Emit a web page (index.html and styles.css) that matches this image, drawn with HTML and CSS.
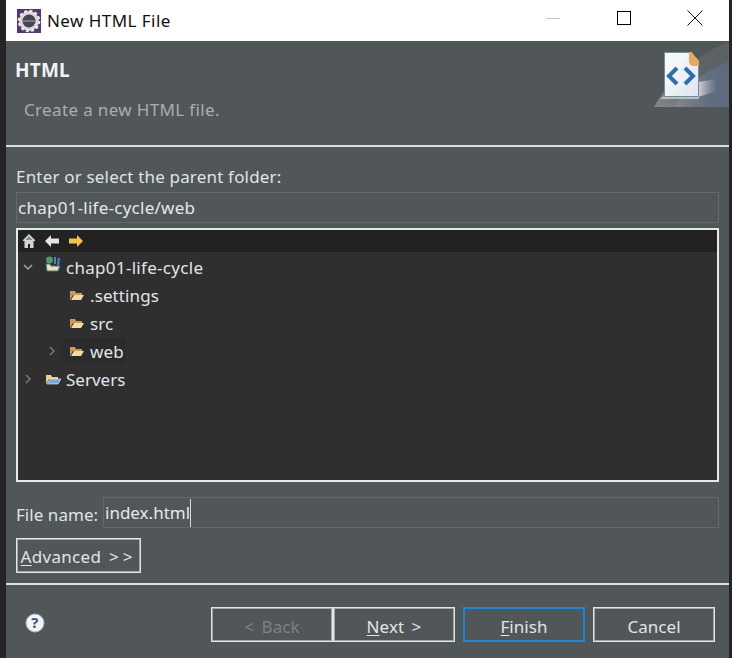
FILE: index.html
```html
<!DOCTYPE html>
<html lang="en">
<head>
<meta charset="utf-8">
<title>New HTML File</title>
<link rel="stylesheet" href="styles.css">
</head>
<body>
<div class="window">
  <header class="titlebar">
    <svg class="app-icon" width="24" height="24" viewBox="0 0 24 24">
      <rect width="24" height="24" fill="#51386f"/>
      <circle cx="12" cy="12" r="8.2" fill="none" stroke="#d8d8d8" stroke-width="3.4"/>
      <circle cx="12" cy="12" r="10" fill="none" stroke="#e8e8e8" stroke-width="2.6" stroke-dasharray="3 2.24"/>
      <circle cx="12" cy="12" r="6.2" fill="#45454f"/>
      <rect x="6" y="11" width="12" height="2" fill="#77778a"/>
    </svg>
    <span class="title-text">New HTML File</span>
    <div class="win-controls">
      <svg class="win-btn" width="16" height="16" viewBox="0 0 16 16"><path d="M1 8.500h14" stroke="#c4c4c4" fill="none"/></svg>
      <svg class="win-btn" width="16" height="16" viewBox="0 0 16 16"><rect x="1.500" y="1.500" width="13" height="13" fill="none" stroke="#000"/></svg>
      <svg class="win-btn" width="16" height="16" viewBox="0 0 16 16"><path d="M.5.5l15 15M15.500.5l-15 15" stroke="#111" fill="none"/></svg>
    </div>
  </header>

  <section class="banner">
    <div class="banner-text">
      <h1 class="banner-title">HTML</h1>
      <p class="banner-desc">Create a new HTML file.</p>
    </div>
    <svg class="banner-art" width="78" height="67" viewBox="0 0 78 67">
      <defs>
        <linearGradient id="sheet" x1="0" y1="0" x2="1" y2="1"><stop offset="0" stop-color="#fbfcfe"/><stop offset="1" stop-color="#dfe6f0"/></linearGradient>
        <linearGradient id="glowA" x1="0" y1="1" x2="1" y2="0"><stop offset="0" stop-color="#85888a"/><stop offset=".5" stop-color="#5f6467"/><stop offset="1" stop-color="#5a6063"/></linearGradient>
        <linearGradient id="glowB" x1="0" y1="0" x2="1" y2="0"><stop offset="0" stop-color="#85888b"/><stop offset=".6" stop-color="#626e80"/><stop offset="1" stop-color="#5d6a7d"/></linearGradient>
        <linearGradient id="shine" x1="0" y1="0" x2="1" y2="0"><stop offset="0" stop-color="#d6d3dc"/><stop offset="1" stop-color="#a9a8b4" stop-opacity="0"/></linearGradient>
      </defs>
      <path d="M3 66C15 45 35 18 78 1V66Z" fill="url(#glowA)"/>
      <path d="M24 66C32 50 50 30 78 21V66Z" fill="url(#glowB)"/>
      <path d="M47 41L66 38V50L47 56Z" fill="url(#shine)"/>
      <path d="M9 58L13 55H48V58Z" fill="#bdbdbd"/>
      <path d="M13.500 11.500H40L47.500 20V55.500H13.500Z" fill="url(#sheet)" stroke="#6f9095"/>
      <path d="M38 11H40.500L48 20V25H42Q37 24 38 17Z" fill="#e8a862"/>
      <path d="M26 27L18 35 26 43" fill="none" stroke="#2f6ea6" stroke-width="4"/>
      <path d="M34 27L42 35 34 43" fill="none" stroke="#2f6ea6" stroke-width="4"/>
    </svg>
  </section>

  <main class="content">
    <label class="field-label">Enter or select the parent folder:</label>
    <div class="text-field parent-field">chap01-life-cycle/web</div>

    <div class="tree">
      <div class="tree-toolbar">
        <svg width="14" height="16" viewBox="0 0 14 16"><path d="M7 1L1 7v1h1.500v7H6v-4h2v4h3.500V8H13V7z" fill="#d4d4d4"/><path d="M7 3L3.500 7h7z" fill="#8a8a8a"/></svg>
        <svg width="16" height="14" viewBox="0 0 16 14"><path d="M1 7l6-6v3.500h8v5H7V13z" fill="#e6e6e6"/></svg>
        <svg width="16" height="14" viewBox="0 0 16 14"><path d="M15 7L9 1v3.500H1v5h8V13z" fill="#f4c24f"/></svg>
      </div>
      <ul class="tree-list">
        <li class="tree-row depth-0">
          <svg class="twisty" width="10" height="10" viewBox="0 0 10 10"><path d="M1 3l4 4 4-4" fill="none" stroke="#a8a8a8" stroke-width="1.500"/></svg>
          <svg class="node-icon project-icon" width="16" height="18" viewBox="0 0 16 18"><path d="M1 9h4l1 2h9l-2 5H2z" fill="#f3dfa8" stroke="#3f6fa8"/><circle cx="4.500" cy="5" r="3.500" fill="#4c9a6a"/><path d="M10 9V2M13 10l1-7" stroke="#4c86c8" stroke-width="2"/></svg>
          <span>chap01-life-cycle</span>
        </li>
        <li class="tree-row depth-1"><i class="twisty-gap"></i><svg class="node-icon" width="16" height="14" viewBox="0 0 16 14"><path d="M1 12V3h5l1 2h6v2H4l-3 5z" fill="#c99a55"/><path d="M2 12l3-5h10l-3 5z" fill="#f4d9a4"/></svg><span>.settings</span></li>
        <li class="tree-row depth-1"><i class="twisty-gap"></i><svg class="node-icon" width="16" height="14" viewBox="0 0 16 14"><path d="M1 12V3h5l1 2h6v2H4l-3 5z" fill="#c99a55"/><path d="M2 12l3-5h10l-3 5z" fill="#f4d9a4"/></svg><span>src</span></li>
        <li class="tree-row depth-1">
          <svg class="twisty" width="10" height="10" viewBox="0 0 10 10"><path d="M3 1l4 4-4 4" fill="none" stroke="#777" stroke-width="1.500"/></svg>
          <span class="hover-node"><svg class="node-icon" width="16" height="14" viewBox="0 0 16 14"><path d="M1 12V3h5l1 2h6v2H4l-3 5z" fill="#c99a55"/><path d="M2 12l3-5h10l-3 5z" fill="#f4d9a4"/></svg><span>web</span></span>
        </li>
        <li class="tree-row depth-0">
          <svg class="twisty" width="10" height="10" viewBox="0 0 10 10"><path d="M3 1l4 4-4 4" fill="none" stroke="#777" stroke-width="1.500"/></svg>
          <svg class="node-icon" width="16" height="14" viewBox="0 0 16 14"><path d="M1 12V3h5l1 2h6v2H4l-3 5z" fill="#f0cf8c"/><path d="M2 12l3-5h11l-3 5z" fill="#7ea6dc" stroke="#dbe8f8" stroke-width=".7"/></svg><span class="servers">Servers</span>
        </li>
      </ul>
    </div>

    <div class="file-row">
      <label class="file-label">File name:</label>
      <div class="text-field file-field"><span class="caret-text">index.html</span></div>
    </div>

    <button class="btn advanced"><u>A</u>dvanced <span class="chev">&gt;&gt;</span></button>
  </main>

  <footer class="footer">
    <svg class="help" width="20" height="20" viewBox="0 0 20 20">
      <circle cx="10" cy="10" r="9" fill="#f1f3f8" stroke="#aab4cc"/>
      <text x="10" y="15" text-anchor="middle" class="help-mark">?</text>
    </svg>
    <div class="actions">
      <div class="nav-pair">
        <button class="btn disabled">&lt; Back</button>
        <button class="btn"><u>N</u>ext &gt;</button>
      </div>
      <button class="btn primary"><u>F</u>inish</button>
      <button class="btn">Cancel</button>
    </div>
  </footer>
</div>
</body>
</html>
```
FILE: styles.css
```css
* { box-sizing: border-box; }
html, body { margin: 0; height: 100%; }
body {
  background: #242424;
  font-family: "Noto Sans", "Noto Sans CJK KR", sans-serif;
  font-size: 17px;
  letter-spacing: .18px;
  color: #dfe3e6;
  overflow: hidden;
}
.window {
  margin-left: 6px;
  width: 723px;
  height: 658px;
  background: #515658;
  display: flex;
  flex-direction: column;
}
.titlebar {
  height: 41px;
  background: #fff;
  display: flex;
  align-items: center;
  padding-left: 11px;
  color: #111;
  flex: none;
}
.title-text { margin-left: 6px; letter-spacing: .45px; }
.win-controls {
  margin-left: auto;
  display: flex;
  gap: 55px;
  padding-right: 26px;
}
.win-btn { display: block; margin-top: -5px; }
.banner {
  height: 106px;
  flex: none;
  border-bottom: 2px solid #dcdfe0;
  display: flex;
  justify-content: space-between;
}
.banner-text { padding: 18px 0 0 9px; }
.banner-title { margin: 0; font-size: 19px; line-height: 22px; font-weight: 700; color: #f0f2f4; letter-spacing: .2px; }
.banner-desc { margin: 18px 0 0 9px; line-height: 22px; color: #a9adaf; letter-spacing: .35px; }
.banner-art { display: block; flex: none; }
.content {
  flex: none;
  height: 438px;
  border-bottom: 2px solid #dcdfe0;
  padding: 19px 10px 0;
  display: flex;
  flex-direction: column;
}
.field-label { line-height: 22px; height: 26px; }
.text-field {
  border: 1px solid #646a6c;
  height: 31px;
  line-height: 29px;
  padding-left: 1px;
  color: #e4e8ea;
}
.parent-field { letter-spacing: .25px; }
.tree {
  margin-top: 5px;
  height: 254px;
  border: 2px solid #e6e8e9;
  background: #2f2f2f;
  flex: none;
}
.tree-toolbar {
  height: 22px;
  background: #222;
  display: flex;
  align-items: center;
  gap: 8px;
  padding: 0 0 0 4px;
}
.tree-toolbar svg { display: block; }
.tree-list { list-style: none; margin: 0; padding: 1px 0 0; }
.tree-row { height: 28px; display: flex; align-items: center; color: #e0e6ea; letter-spacing: .1px; }
.depth-0 { padding-left: 5px; letter-spacing: .3px; }
.servers { letter-spacing: 0; }
.depth-1 { padding-left: 29px; }
.twisty { display: block; flex: none; }
.twisty-gap { display: block; width: 10px; flex: none; }
.node-icon { display: block; margin-left: 12px; margin-right: 5px; flex: none; }
.project-icon { margin-top: -6px; }
.hover-node {
  display: flex;
  align-items: center;
  background: #2b2b2b;
  height: 26px;
  margin-left: 6px;
  padding-right: 2px;
}
.hover-node .node-icon { margin-left: 6px; }
.file-row { display: flex; align-items: stretch; margin-top: 15px; height: 31px; flex: none; }
.file-label { width: 87px; line-height: 35px; flex: none; letter-spacing: .05px; }
.file-field { flex: 1; letter-spacing: 0; }
.caret-text { border-right: 1px solid #d8d8d8; display: inline-block; line-height: 28px; height: 28px; }
.btn {
  font: inherit;
  letter-spacing: .05px;
  word-spacing: 3px;
  color: #e0e4e7;
  background: transparent;
  border: 1px solid #e2e4e5;
  box-shadow: inset 0 0 0 1px #a4a7a9;
  width: 122px;
  height: 35px;
  padding: 3px 0 0;
  border-radius: 0;
}
.btn u { text-underline-offset: 2px; }
.advanced { width: 125px; margin-top: 10px; flex: none; padding-top: 2px; letter-spacing: .3px; }
.chev { letter-spacing: 4px; }
.footer {
  flex: 1;
  display: flex;
  align-items: flex-start;
  padding: 22px 14px 0 19px;
  justify-content: space-between;
}
.help { display: block; margin-top: 6px; }
.help-mark { font: 700 15px "Noto Sans", sans-serif; fill: #47536e; }
.actions { display: flex; gap: 8px; }
.nav-pair { display: flex; }
.disabled { color: #7c8184; }
.primary { border: 2px solid #1f86d6; box-shadow: none; }
```
